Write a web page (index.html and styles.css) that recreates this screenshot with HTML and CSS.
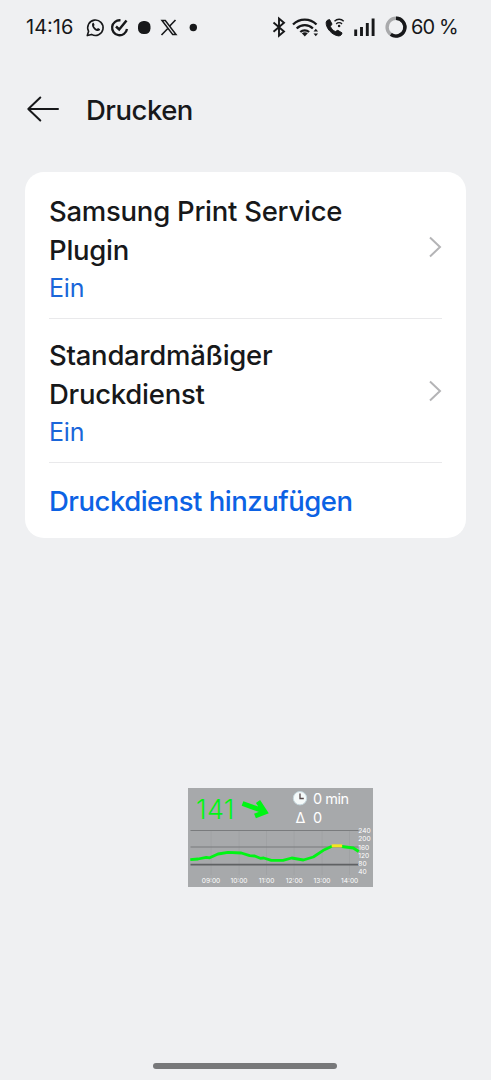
FILE: index.html
```html
<!DOCTYPE html>
<html lang="de">
<head>
    <meta charset="UTF-8">
    <meta name="viewport" content="width=device-width, initial-scale=1.0">
    <title>Drucken</title>
    <link rel="stylesheet" href="styles.css">
</head>
<body>
    <div class="status-bar">
        <span class="time">14:16</span>
        <svg class="notifications" width="120" height="24" viewBox="0 0 120 24">
            <!-- WhatsApp -->
            <path d="M2.3 20.6 3.6 16.3A7.7 7.7 0 1 1 6.6 19.4Z" fill="none" stroke="#17181a" stroke-width="1.6" stroke-linejoin="round"/>
            <path d="M7.4 8.3c.5-.6 1.2-.6 1.5 0l.7 1.6-.7 1.2c.7 1.4 1.6 2.3 3 2.9l1.1-1 1.8.9c.5.3.2 1.3-.4 1.7-1.3.9-3.4.3-5.1-1.2S6.3 10 7.4 8.3Z" fill="#17181a"/>
            <!-- check circle -->
            <path d="M35.500 5.300A7.500 7.500 0 1 0 42 14" fill="none" stroke="#17181a" stroke-width="2.300"/>
            <path d="M31 11.500l3.200 3L41.500 5.500" fill="none" stroke="#17181a" stroke-width="2.500"/>
            <rect x="53" y="6" width="12.500" height="13" rx="5.500" fill="#17181a"/>
            <!-- X -->
            <path d="M77 5.500h3.300L91 19.500h-3.300Z" fill="none" stroke="#17181a" stroke-width="1.500"/>
            <path d="M90.500 5l-6 6.300M82.800 13.500 76.500 20" stroke="#17181a" stroke-width="1.600"/>
            <circle cx="108.300" cy="12.500" r="3.700" fill="#17181a"/>
        </svg>
        <svg class="system" width="140" height="24" viewBox="0 0 140 24">
            <!-- Bluetooth -->
            <path d="M2.500 7.500l10.500 9-5 4.200V3.500l5 4.200-10.500 9" fill="none" stroke="#17181a" stroke-width="1.900"/>
            <!-- WLAN -->
            <g fill="none" stroke="#17181a" stroke-width="2.300">
                <path d="M22 9.500a16.500 16.500 0 0 1 23.500 0"/>
                <path d="M25.700 13.500a11.500 11.500 0 0 1 16.200 0"/>
                <path d="M29.300 17a6.500 6.500 0 0 1 8.800 0"/>
            </g>
            <path d="M30.800 18.300q3-2.300 6 0l-3 3.200Z" fill="#17181a"/>
            <path d="M42.500 16.500l2.300-2.700 2.300 2.700ZM42.500 18.500l2.300 2.700 2.300-2.700Z" fill="#17181a"/>
            <!-- WLAN-Anruf -->
            <path d="M56.300 5.300l2.300-.7 2.400 4.500-1.700 2.300c1.300 2.500 2.700 4 5 5.200l2.500-1.300 4.200 2.600c-.2 2-1.700 3-3.500 3-6.500-.7-13-8-12.300-13.800Z" fill="#17181a" stroke="#17181a" stroke-linejoin="round"/>
            <path d="M63.500 6.200a6.500 6.500 0 0 1 9.200 0M65.200 8.900a4 4 0 0 1 5.800 0" fill="none" stroke="#17181a" stroke-width="1.400"/>
            <circle cx="68.100" cy="11" r="1.300" fill="#17181a"/>
            <!-- Signal -->
            <path d="M84.700 21v-6.500M90.500 21v-9M96.300 21V8M102.100 21V3.500" stroke="#17181a" stroke-width="2.900"/>
            <!-- Akku -->
            <circle cx="125" cy="12.200" r="8.900" fill="none" stroke="#a9aaac" stroke-width="3.400"/>
            <path d="M125 3.300a8.900 8.900 0 1 1-5.200 16.100" fill="none" stroke="#17181a" stroke-width="3.400"/>
        </svg>
        <span class="battery">60 %</span>
    </div>

    <div class="header">
        <svg class="back" width="34" height="28" viewBox="0 0 34 28">
            <path d="M14.300 2.500 2.300 14l12 11.500M2.300 14H32" fill="none" stroke="#17181a" stroke-width="2" stroke-linecap="round" stroke-linejoin="round"/>
        </svg>
        <h1>Drucken</h1>
    </div>

    <div class="card">
        <div class="row">
            <div class="row-text">
                <h2>Samsung Print Service<br>Plugin</h2>
                <p>Ein</p>
            </div>
            <svg class="chevron" width="14" height="24" viewBox="0 0 14 24">
                <path d="M2 2.500 12 12 2 21.500" fill="none" stroke="#b4b4b6" stroke-width="2"/>
            </svg>
        </div>
        <div class="row">
            <div class="row-text">
                <h2>Standardmäßiger<br>Druckdienst</h2>
                <p>Ein</p>
            </div>
            <svg class="chevron" width="14" height="24" viewBox="0 0 14 24">
                <path d="M2 2.500 12 12 2 21.500" fill="none" stroke="#b4b4b6" stroke-width="2"/>
            </svg>
        </div>
        <a class="add">Druckdienst hinzufügen</a>
    </div>

    <!-- floating glucose widget -->
    <div class="widget">
        <svg width="185" height="99" viewBox="0 0 185 99">
            <path d="M23 42v45M51 42v45M78.500 42v45M106 42v45M134 42v45M161.500 42v45" stroke="#a0a2a4" stroke-width="1"/>
            <path d="M2.500 42.500h168M2.500 59h168" stroke="#797b7d" stroke-width="1.200"/>
            <path d="M2.500 76.700h168" stroke="#5f6163" stroke-width="1.800"/>
            <g fill="none" stroke="#00f514" stroke-width="2.800" stroke-linejoin="round">
                <path d="M2.300 71.700 10 71l8.300-1.700 3.400.5L30 66l10-1.700 13.300.7 8.400 2.700 5 .3 5.600 2.300 3.400-.3 7.600 2.300H95l8.700-2.300 11.600 2 10-3 10-6.700 8.700-4"/>
                <path d="M153.700 58.500l11.600 1.500 5.400 3.500"/>
            </g>
            <path d="M143.700 57.800h10.500" stroke="#f5e51e" stroke-width="3"/>
            <path d="M54.500 15.500l21 7.500M70 13.500l7 10.500-10 4" fill="none" stroke="#00f514" stroke-width="5"/>
            <circle cx="112" cy="10.200" r="6.700" fill="#f5fafa" stroke="#c3d5dc"/>
            <path d="M112 5.500v5h3.800" fill="none" stroke="#56494a" stroke-width="1.300"/>
            <text class="value" x="8" y="30.700" textLength="38.500">141</text>
            <g class="info">
                <text x="125" y="15.500" textLength="36">0 min</text>
                <text x="107.500" y="34.500">Δ</text>
                <text x="125" y="34.500">0</text>
            </g>
            <g class="scale">
                <text x="170.300" y="45">240</text>
                <text x="170.300" y="53.300">200</text>
                <text x="170.300" y="61.500">160</text>
                <text x="170.300" y="69.800">120</text>
                <text x="170.300" y="78">80</text>
                <text x="170.300" y="86.200">40</text>
            </g>
            <g class="scale hours">
                <text x="23" y="95.200">09:00</text>
                <text x="51" y="95.200">10:00</text>
                <text x="78.500" y="95.200">11:00</text>
                <text x="106.300" y="95.200">12:00</text>
                <text x="134" y="95.200">13:00</text>
                <text x="161.700" y="95.200">14:00</text>
            </g>
        </svg>
    </div>

    <div class="nav-handle"></div>
</body>
</html>
```

FILE: styles.css
```css
* {
    box-sizing: border-box;
}
body {
    display: flex;
    flex-direction: column;
    height: 1080px;
    margin: 0;
    font-family: Inter, "Liberation Sans", sans-serif;
    background-color: #eff0f2;
    color: #17181a;
}
h1, h2, p {
    margin: 0;
}
svg {
    display: block;
    flex-shrink: 0;
}
.status-bar {
    display: flex;
    align-items: center;
    height: 54px;
    padding: 0 34px 0 26px;
    font-size: 20px;
    white-space: nowrap;
}
.time {
    width: 59px;
    letter-spacing: 0;
}
.system {
    margin-left: auto;
}
.battery {
    width: 46px;
    letter-spacing: -0.9px;
}
.header {
    display: flex;
    align-items: center;
    height: 110px;
    padding: 0 26px;
}
.header h1 {
    margin-left: 26px;
    padding-top: 1px;
    font-size: 27.5px;
    font-weight: 500;
    letter-spacing: -0.5px;
}
.card {
    margin: 8px 25px 0;
    padding: 0 24px;
    height: 366px;
    border-radius: 19px;
    background-color: white;
}
.row {
    display: flex;
    align-items: center;
    justify-content: space-between;
    height: 144px;
    padding-top: 6px;
    border-bottom: 1px solid #e9e9eb;
}
.row:first-child {
    height: 147px;
    padding-top: 9px;
}
.row h2 {
    font-size: 27.5px;
    font-weight: 500;
    line-height: 38.5px;
    letter-spacing: -0.26px;
}
.row p {
    font-size: 25px;
    line-height: 38px;
    letter-spacing: -0.2px;
    color: #1a66d9;
}
.chevron {
    margin-bottom: 6px;
}
.add {
    display: block;
    font-size: 27.5px;
    font-weight: 500;
    line-height: 76px;
    letter-spacing: -0.5px;
    color: #0c62e4;
}
.widget {
    position: absolute;
    left: 188px;
    top: 788px;
    width: 185px;
    height: 99px;
    background-color: #a7a9ab;
}
.value {
    font-size: 27px;
    font-weight: 300;
    fill: #00f514;
}
.info {
    font-size: 14.5px;
    fill: white;
}
.scale {
    font-size: 6.6px;
    fill: white;
}
.hours {
    text-anchor: middle;
}
.nav-handle {
    width: 184px;
    height: 6px;
    margin: auto 0 11px 153px;
    border-radius: 3px;
    background-color: #77787a;
}
```
